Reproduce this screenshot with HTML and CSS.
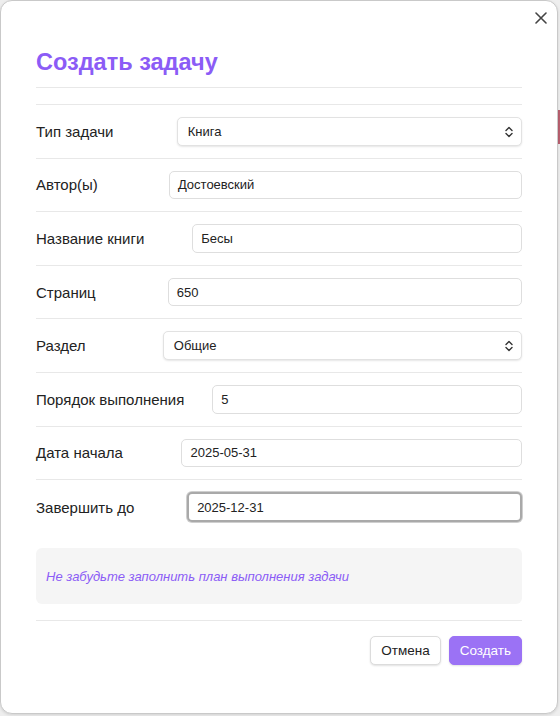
FILE: index.html
```html
<!DOCTYPE html>
<html lang="ru">
<head>
<meta charset="utf-8">
<title>Создать задачу</title>
<link rel="stylesheet" href="styles.css">
</head>
<body>
<div class="backdrop-strip"></div>
<div class="modal">
  <button class="close" aria-label="Закрыть">
    <svg width="12" height="12" viewBox="0 0 12 12"><path d="M1 1L11 11M11 1L1 11" stroke="#444" stroke-width="1.6" stroke-linecap="round"/></svg>
  </button>
  <div class="header">
    <h1 class="title">Создать задачу</h1>
  </div>
  <div class="form">
    <div class="row">
      <label class="label">Тип задачи</label>
      <div class="control select">Книга
        <svg class="chev" width="8" height="12" viewBox="0 0 8 12"><path d="M1 4.5L4 1.5L7 4.5M1 7.5L4 10.5L7 7.5" fill="none" stroke="#333" stroke-width="1.4" stroke-linecap="round" stroke-linejoin="round"/></svg>
      </div>
    </div>
    <div class="row">
      <label class="label">Автор(ы)</label>
      <div class="control input">Достоевский</div>
    </div>
    <div class="row">
      <label class="label">Название книги</label>
      <div class="control input">Бесы</div>
    </div>
    <div class="row">
      <label class="label">Страниц</label>
      <div class="control input">650</div>
    </div>
    <div class="row">
      <label class="label">Раздел</label>
      <div class="control select">Общие
        <svg class="chev" width="8" height="12" viewBox="0 0 8 12"><path d="M1 4.5L4 1.5L7 4.5M1 7.5L4 10.5L7 7.5" fill="none" stroke="#333" stroke-width="1.4" stroke-linecap="round" stroke-linejoin="round"/></svg>
      </div>
    </div>
    <div class="row">
      <label class="label">Порядок выполнения</label>
      <div class="control input">5</div>
    </div>
    <div class="row">
      <label class="label">Дата начала</label>
      <div class="control input">2025-05-31</div>
    </div>
    <div class="row">
      <label class="label">Завершить до</label>
      <div class="control input focused">2025-12-31</div>
    </div>
  </div>
  <div class="hint">Не забудьте заполнить план выполнения задачи</div>
  <div class="footer">
    <button class="btn btn-cancel">Отмена</button>
    <button class="btn btn-primary">Создать</button>
  </div>
</div>
</body>
</html>
```
FILE: styles.css
```css
* { box-sizing: border-box; }
html, body { margin: 0; padding: 0; }
body {
  width: 560px;
  height: 716px;
  background: #eeeeee;
  font-family: "Liberation Sans", Arial, sans-serif;
  color: #222;
  position: relative;
  overflow: hidden;
}
.backdrop-strip {
  position: absolute;
  left: 556px;
  top: 110px;
  width: 6px;
  height: 34px;
  background: #b9606f;
}
.modal {
  position: relative;
  width: 558px;
  height: 714px;
  background: #fff;
  border: 1px solid #c9c9c9;
  border-radius: 12px;
  padding: 0 35px;
  box-shadow: 0 1px 3px rgba(0,0,0,0.12);
}
.close {
  position: absolute;
  top: 10px;
  right: 9px;
  width: 14px;
  height: 14px;
  padding: 1px;
  border: 0;
  background: transparent;
  display: flex;
  align-items: center;
  justify-content: center;
}
.header {
  padding-top: 46px;
  padding-bottom: 10px;
  border-bottom: 1px solid #e8e8e8;
}
.title {
  margin: 0;
  font-size: 23.5px;
  line-height: 30px;
  font-weight: 700;
  color: #8b5cf6;
}
.form {
  margin-top: 16px;
  border-top: 1px solid #e8e8e8;
}
.row {
  display: flex;
  align-items: center;
  padding: 12px 0;
  border-bottom: 1px solid #e8e8e8;
}
.row:last-child { border-bottom: 0; }
.label {
  flex: 1 1 auto;
  font-size: 15px;
  color: #222;
  white-space: nowrap;
}
.control {
  flex: 1 1 auto;
  width: 282px;
  height: 28.6px;
  display: flex;
  align-items: center;
  padding: 0 8px;
  font-size: 13px;
  color: #222;
  background: #fff;
  border: 1px solid #dedede;
  border-radius: 5px;
  position: relative;
}
.select {
  padding-left: 10px;
  border-color: #e2e2e2;
  box-shadow: 0 1px 2px rgba(0,0,0,0.10);
}
.chev {
  position: absolute;
  right: 8px;
  top: 8px;
}
.focused {
  border: 2px solid #a9a9a9;
  box-shadow: 0 0 0 1px #cfcfcf;
  height: 30px;
  padding-left: 8px;
}
.hint {
  margin-top: 14px;
  height: 56px;
  display: flex;
  align-items: center;
  padding: 0 10px;
  background: #f5f5f5;
  border-radius: 6px;
  font-size: 13px;
  font-style: italic;
  color: #8b5cf6;
}
.footer {
  margin-top: 16px;
  border-top: 1px solid #e8e8e8;
  padding-top: 15px;
  display: flex;
  justify-content: flex-end;
  gap: 8px;
}
.btn {
  height: 29px;
  padding: 0 10px;
  font-family: "Liberation Sans", Arial, sans-serif;
  font-size: 13.5px;
  border-radius: 5px;
  cursor: pointer;
}
.btn-cancel {
  background: #fff;
  color: #222;
  border: 1px solid #dcdcdc;
  box-shadow: 0 1px 2px rgba(0,0,0,0.12);
}
.btn-primary {
  background: #9b72f5;
  color: #fff;
  border: 1px solid #9b72f5;
  box-shadow: 0 1px 2px rgba(0,0,0,0.12);
}
```
